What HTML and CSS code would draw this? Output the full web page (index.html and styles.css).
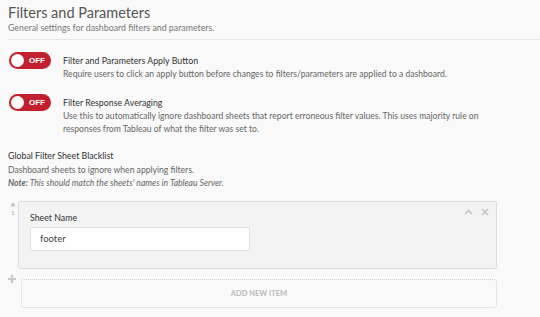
FILE: index.html
```html
<!DOCTYPE html>
<html>
<head>
<meta charset="utf-8">
<link rel="stylesheet" href="styles.css">
</head>
<body>
<div class="page">
  <header class="head">
    <h1 class="title">Filters and Parameters</h1>
    <p class="subtitle">General settings for dashboard filters and parameters.</p>
  </header>
  <div class="setting">
    <div class="toggle"><span class="knob"></span><span class="toggle-label">OFF</span></div>
    <div class="setting-text">
      <div class="setting-name">Filter and Parameters Apply Button</div>
      <p class="setting-desc">Require users to click an apply button before changes to filters/parameters are applied to a dashboard.</p>
    </div>
  </div>
  <div class="setting second">
    <div class="toggle"><span class="knob"></span><span class="toggle-label">OFF</span></div>
    <div class="setting-text">
      <div class="setting-name">Filter Response Averaging</div>
      <p class="setting-desc">Use this to automatically ignore dashboard sheets that report erroneous filter values. This uses majority rule on responses from Tableau of what the filter was set to.</p>
    </div>
  </div>
  <section class="list-section">
    <div class="setting-name">Global Filter Sheet Blacklist</div>
    <p class="list-desc">Dashboard sheets to ignore when applying filters.<br><em class="note"><strong>Note:</strong> This should match the sheets' names in Tableau Server.</em></p>
    <div class="item-row">
      <div class="handle"><span class="dot"></span><span class="num">1</span></div>
      <div class="card">
        <div class="card-actions">
          <svg width="9" height="6" viewBox="0 0 9 6"><path d="M1 5 L4.5 1.5 L8 5" fill="none" stroke="#c4c4c4" stroke-width="1.6"/></svg>
          <svg width="8" height="8" viewBox="0 0 8 8"><path d="M1 1 L7 7 M7 1 L1 7" fill="none" stroke="#c4c4c4" stroke-width="1.6"/></svg>
        </div>
        <label class="field-label">Sheet Name</label>
        <div class="input">footer</div>
      </div>
    </div>
    <div class="add-row">
      <div class="plus">
        <svg width="8" height="8" viewBox="0 0 8 8"><path d="M4 0 V8 M0 4 H8" stroke="#c8c8c8" stroke-width="2.2"/></svg>
      </div>
      <div class="add-box">ADD NEW ITEM</div>
    </div>
  </section>
</div>
</body>
</html>
```

FILE: styles.css
```css
html, body {
  margin: 0;
  padding: 0;
  background: #f9f9f9;
}
body {
  font-family: Lato, "Liberation Sans", sans-serif;
  color: #333;
}
.page {
  padding: 4px 0 0 8px;
}
.head {
  border-bottom: 1px solid #e6e6e6;
  padding-bottom: 5px;
}
.title {
  margin: 0;
  font-size: 14.5px;
  font-weight: 400;
  color: #555;
  line-height: 18px;
}
.subtitle {
  margin: 0;
  font-size: 8.8px;
  color: #777;
  line-height: 12px;
}
.setting {
  display: flex;
  align-items: flex-start;
  margin-top: 12px;
  padding-left: 1px;
}
.setting.second {
  margin-top: 13px;
}
.toggle {
  width: 42px;
  height: 17px;
  border-radius: 9px;
  background: #c3202f;
  display: flex;
  align-items: center;
  padding: 0 2px;
  box-sizing: border-box;
  flex: none;
}
.knob {
  width: 13px;
  height: 13px;
  border-radius: 50%;
  background: #fff;
}
.toggle-label {
  color: #fff;
  font-size: 8px;
  font-weight: 700;
  margin-left: 5px;
  font-family: "Liberation Sans", sans-serif;
}
.setting-text {
  margin-left: 12px;
  padding-top: 2px;
}
.setting-name {
  font-size: 8.8px;
  color: #333;
  line-height: 13px;
}
.setting-desc {
  margin: 1px 0 0;
  font-size: 8.6px;
  line-height: 13px;
  color: #666;
  max-width: 425px;
}
.list-section {
  margin-top: 13px;
}
.list-desc {
  margin: 2px 0 0;
  font-size: 8.6px;
  line-height: 12.5px;
  color: #666;
}
.note {
  color: #666;
}
.item-row {
  display: flex;
  margin-top: 12px;
}
.handle {
  width: 10px;
  display: flex;
  flex-direction: column;
  align-items: center;
  padding-top: 2px;
}
.dot {
  width: 4px;
  height: 4px;
  border-radius: 50%;
  background: #c8c8c8;
}
.num {
  font-size: 6px;
  color: #aaa;
  margin-top: 2px;
}
.card {
  position: relative;
  width: 479px;
  height: 68px;
  box-sizing: border-box;
  background: #f3f3f3;
  border: 1px solid #dcdcdc;
  border-radius: 2px;
  padding: 9px 0 0 11px;
}
.card-actions {
  position: absolute;
  top: 6px;
  right: 7px;
  display: flex;
  align-items: center;
  gap: 8px;
}
.field-label {
  display: block;
  font-size: 8.8px;
  color: #333;
  line-height: 13px;
}
.input {
  margin-top: 3px;
  width: 220px;
  height: 24px;
  box-sizing: border-box;
  background: #fff;
  border: 1px solid #e0e0e0;
  border-radius: 2px;
  font-size: 9.5px;
  line-height: 22px;
  padding-left: 9px;
  color: #444;
}
.add-row {
  display: flex;
  margin-top: 10px;
}
.plus {
  width: 13px;
  margin-top: -4px;
  display: flex;
  justify-content: flex-start;
}
.add-box {
  width: 476px;
  height: 29px;
  box-sizing: border-box;
  border: 1px dotted #d0d0d0;
  border-radius: 3px;
  display: flex;
  align-items: center;
  justify-content: center;
  font-size: 7.5px;
  font-weight: 700;
  color: #bbb;
}
```
